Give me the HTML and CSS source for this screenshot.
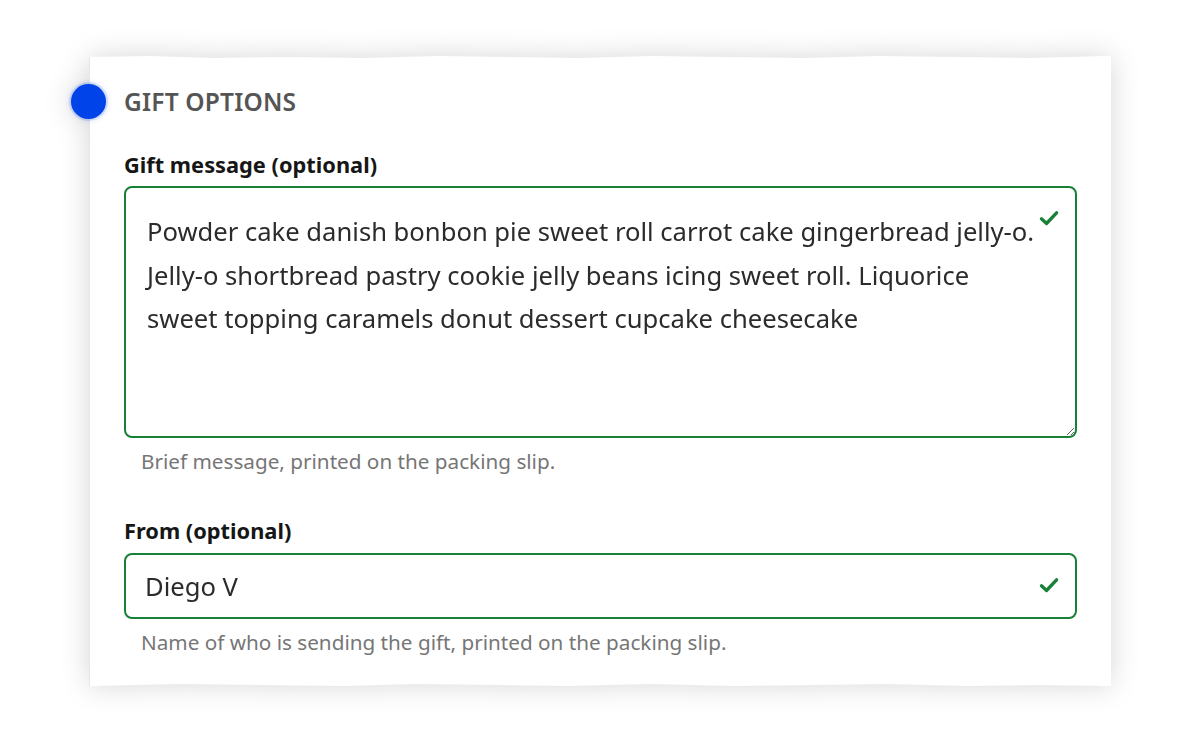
FILE: index.html
```html
<!DOCTYPE html>
<html lang="en">
<head>
<meta charset="utf-8">
<title>Gift options</title>
<link rel="stylesheet" href="styles.css">
</head>
<body>
<div class="stage">
  <div class="paper-shadow">
    <section class="paper">
      <h2 class="section-title">GIFT OPTIONS</h2>
      <div class="field">
        <label class="field-label" for="msg">Gift message (optional)</label>
        <div class="control">
          <textarea id="msg" class="textarea" wrap="off">Powder cake danish bonbon pie sweet roll carrot cake gingerbread jelly-o.
Jelly-o shortbread pastry cookie jelly beans icing sweet roll. Liquorice
sweet topping caramels donut dessert cupcake cheesecake</textarea>
          <svg class="check" viewBox="0 0 16 16" aria-hidden="true"><path d="M2.5 8.6 L6.2 12 L13.5 4.2" fill="none" stroke="#198038" stroke-width="2.4" stroke-linecap="round" stroke-linejoin="round"/></svg>
        </div>
        <p class="helper">Brief message, printed on the packing slip.</p>
      </div>
      <div class="field field-from">
        <label class="field-label" for="from">From (optional)</label>
        <div class="control">
          <input id="from" class="input" type="text" value="Diego V">
          <svg class="check" viewBox="0 0 16 16" aria-hidden="true"><path d="M2.5 8.6 L6.2 12 L13.5 4.2" fill="none" stroke="#198038" stroke-width="2.4" stroke-linecap="round" stroke-linejoin="round"/></svg>
        </div>
        <p class="helper">Name of who is sending the gift, printed on the packing slip.</p>
      </div>
    </section>
    <span class="step-dot" aria-hidden="true"></span>
  </div>
</div>
</body>
</html>
```
FILE: styles.css
```css
* { box-sizing: border-box; }
html, body { margin: 0; padding: 0; background: #ffffff; }
body {
  font-family: "Noto Sans", "Open Sans", sans-serif;
  color: #161616;
  width: 1200px;
  height: 739px;
  overflow: hidden;
}
.stage {
  padding: 56px 0 0 89px;
}
.paper-shadow {
  position: relative;
  width: 1022px;
  filter: drop-shadow(0 0 14px rgba(0,0,0,0.16));
}
.paper {
  background: #ffffff;
  height: 630px;
  padding: 30px 34px 0 35px;
  clip-path: polygon(
    0 1px, 6% 0, 12% 2px, 19% 1px, 27% 2px, 34% 0, 41% 1px, 48% 2px, 55% 0, 62% 1px, 70% 2px, 77% 0, 85% 1px, 92% 2px, 100% 0,
    100% 100%, 93% calc(100% - 1px), 86% 100%, 78% calc(100% - 2px), 71% calc(100% - 1px), 63% 100%, 55% calc(100% - 2px), 47% 100%, 40% calc(100% - 1px), 32% calc(100% - 2px), 25% 100%, 17% calc(100% - 1px), 9% calc(100% - 2px), 0 100%
  );
  box-shadow: inset 1px 0 0 #e6e6e6;
}
.step-dot {
  position: absolute;
  left: -18px;
  top: 28px;
  width: 35px;
  height: 35px;
  border-radius: 50%;
  background: #0043e8;
  box-shadow: 0 0 0 2px rgba(0, 67, 232, 0.12), 0 0 6px rgba(0, 67, 232, 0.25);
}
.section-title {
  margin: 0;
  font-size: 24.5px;
  line-height: 32px;
  font-weight: 600;
  color: #555555;
  letter-spacing: 0.2px;
}
.field { margin-top: 34px; }
.field-from { margin-top: 44px; }
.field-label {
  display: block;
  font-size: 21.8px;
  line-height: 26px;
  font-weight: 700;
  color: #161616;
  margin-bottom: 8px;
}
.field-from .field-label { margin-bottom: 9px; }
.control { position: relative; }
.textarea {
  display: block;
  width: 953px;
  height: 252px;
  border: 2px solid #198038;
  border-radius: 8px;
  padding: 22px 21px;
  font-family: inherit;
  font-size: 25.6px;
  line-height: 43.5px;
  color: #2b2b2b;
  resize: vertical;
  overflow: hidden;
  outline: none;
  background: #fff;
}
.input {
  display: block;
  width: 953px;
  height: 66px;
  border: 2px solid #198038;
  border-radius: 8px;
  padding: 0 19px;
  font-family: inherit;
  font-size: 25.6px;
  color: #2b2b2b;
  outline: none;
  background: #fff;
}
.check {
  position: absolute;
  right: 17px;
  top: 21px;
  width: 22px;
  height: 22px;
}
.helper {
  margin: 10px 0 0 17px;
  font-size: 20.7px;
  line-height: 26px;
  color: #767676;
}
```
